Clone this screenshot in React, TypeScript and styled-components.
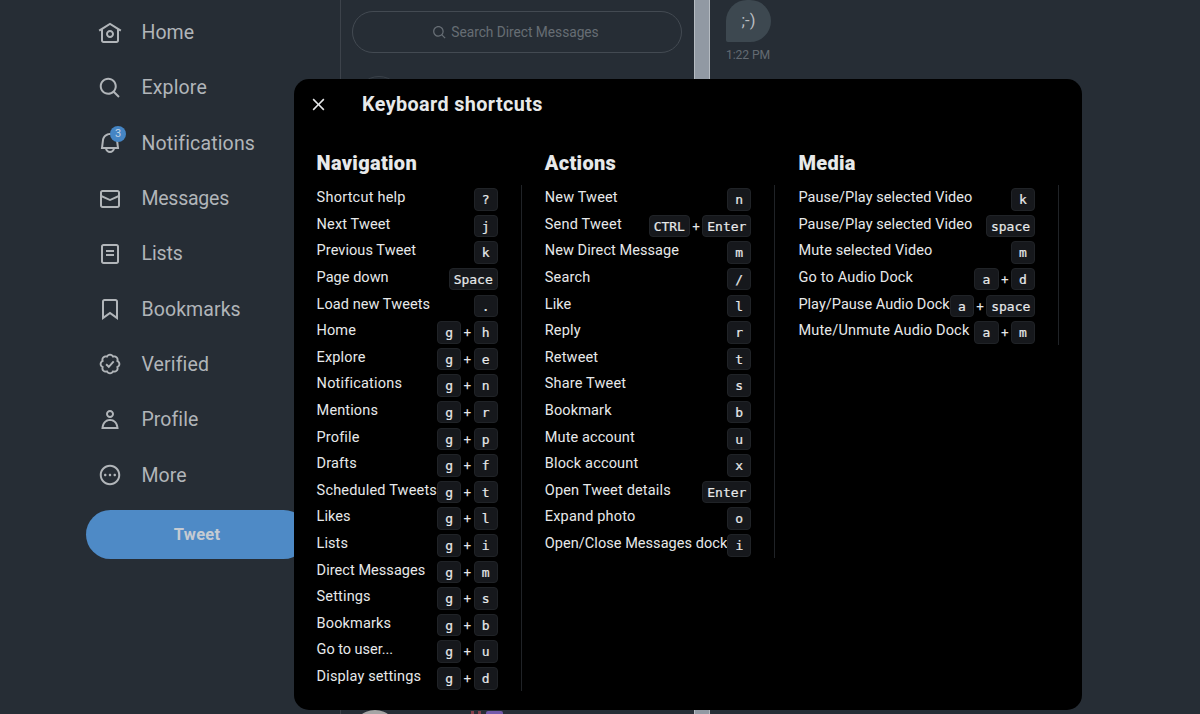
import React from "react";
import styled, { createGlobalStyle } from "styled-components";

const Global = createGlobalStyle`
  * { box-sizing: border-box; }
  html, body { margin: 0; padding: 0; }
  body {
    background: #262d35;
    font-family: Roboto, "Liberation Sans", sans-serif;
    overflow: hidden;
  }
`;

const Page = styled.div`
  position: relative;
  width: 1200px;
  height: 714px;
  overflow: hidden;
  display: flex;
  background: #262d35;
`;

const Sidebar = styled.nav`
  width: 341px;
  flex: none;
  padding: 5px 32px 0 86px;
  border-right: 1px solid #3d434b;
`;

const NavItem = styled.a`
  display: flex;
  align-items: center;
  height: 55.3px;
  padding-left: 12px;
  gap: 19.5px;
  color: #b1b5b9;
`;

const IconBox = styled.span`
  position: relative;
  display: flex;
`;

const NavLabel = styled.span<{ $spacing: number }>`
  margin-top: 1px;
  font-size: 19.5px;
  line-height: 24px;
  letter-spacing: ${(p) => p.$spacing}px;
  white-space: nowrap;
`;

const Badge = styled.span`
  position: absolute;
  left: 12px;
  top: -5px;
  width: 16px;
  height: 16px;
  border-radius: 50%;
  background: #4585c4;
  color: #c3d3e3;
  font-size: 11px;
  line-height: 16px;
  text-align: center;
`;

const TweetButton = styled.button`
  display: block;
  width: 222px;
  height: 49px;
  margin-top: 7px;
  border: 0;
  border-radius: 25px;
  background: #4e8ac6;
  color: #c5cbd2;
  font: 700 16.5px Roboto, sans-serif;
  letter-spacing: 0.2px;
`;

const Inbox = styled.section`
  width: 353px;
  flex: none;
  display: flex;
  flex-direction: column;
  justify-content: space-between;
  padding: 11px 12px 0 11px;
`;

const SearchBox = styled.div`
  height: 42px;
  border: 1px solid #434a52;
  border-radius: 21px;
  display: flex;
  align-items: center;
  justify-content: center;
  gap: 4px;
  padding-right: 3px;
  color: #666d74;
  font-size: 13.75px;
  letter-spacing: -0.03px;
`;

const AvatarRing = styled.div`
  width: 46px;
  height: 46px;
  margin: 23px 0 0 4px;
  border: 1px solid #3a4149;
  border-radius: 50%;
`;

const LastThread = styled.div`
  height: 4px;
  display: flex;
  align-items: flex-start;
  overflow: hidden;
`;

const LastAvatar = styled.div`
  flex: none;
  width: 46px;
  height: 46px;
  border-radius: 50%;
  background: #a5a5a5;
`;

const RedMarks = styled.div`
  width: 10px;
  height: 4px;
  margin: 1px 5px 0 73px;
  border: solid #86404c;
  border-width: 0 3px;
`;

const PurpleTile = styled.div`
  width: 17px;
  height: 6px;
  margin-top: 1px;
  border-radius: 2px 2px 0 0;
  background: #7259aa;
`;

const ScrollTrack = styled.div`
  width: 16px;
  flex: none;
  background: #9199a3;
  border: solid #b5bbc1;
  border-width: 0 1px;
`;

const Chat = styled.main`
  flex: 1;
  padding-left: 16px;
`;

const Bubble = styled.div`
  width: 45px;
  height: 42px;
  border-radius: 22px 22px 22px 2px;
  background: #3d4850;
  color: #b9bdc1;
  display: flex;
  align-items: center;
  justify-content: center;
  font-size: 16.5px;
  padding-bottom: 1px;
`;

const Time = styled.div`
  margin-top: 5px;
  font-size: 12.2px;
  line-height: 16px;
  letter-spacing: -0.1px;
  color: #636a72;
`;

const Dialog = styled.div`
  position: absolute;
  left: 294px;
  top: 79px;
  width: 788px;
  height: 631px;
  border-radius: 15px;
  background: #000;
  color: #e7e9ea;
`;

const DialogHeader = styled.header`
  display: flex;
  align-items: center;
  height: 50px;
  padding-left: 14.5px;
  gap: 34.5px;
`;

const DialogTitle = styled.h2`
  margin: 0;
  font-size: 19.75px;
  font-weight: 700;
  letter-spacing: 0.4px;
`;

const Columns = styled.div`
  display: flex;
  align-items: flex-start;
  padding: 22px 0 0 22.6px;
  gap: 23px;
`;

const Column = styled.section<{ $width: number }>`
  width: ${(p) => p.$width}px;
  flex: none;
`;

const Heading = styled.h3<{ $spacing: number }>`
  margin: 0;
  height: 34.1px;
  line-height: 25px;
  font-size: 20px;
  font-weight: 900;
  letter-spacing: ${(p) => p.$spacing}px;
`;

const List = styled.div`
  border-right: 1px solid #202327;
  padding-right: 23px;
`;

const Row = styled.div`
  height: 26.62px;
  display: flex;
  justify-content: space-between;
`;

const Label = styled.span<{ $spacing: number }>`
  font-size: 14.5px;
  line-height: 25px;
  letter-spacing: ${(p) => p.$spacing}px;
  white-space: nowrap;
`;

const Keys = styled.span`
  display: flex;
  padding-top: 3px;
`;

const Key = styled.kbd`
  min-width: 24.2px;
  height: 22.5px;
  padding: 0 4px;
  border: 1px solid #202327;
  border-radius: 4px;
  background: #16181c;
  font: 13px/22px "DejaVu Sans Mono", monospace;
  -webkit-text-stroke: 0.2px currentColor;
  text-align: center;
`;

const Plus = styled.span`
  width: 12.3px;
  text-align: center;
  font-size: 13.5px;
  line-height: 23px;
`;

const paths = {
  home: "M12 9c-2.209 0-4 1.791-4 4s1.791 4 4 4 4-1.791 4-4-1.791-4-4-4zm0 6c-1.105 0-2-.895-2-2s.895-2 2-2 2 .895 2 2-.895 2-2 2zm0-13.304L.622 8.807l1.06 1.696L3 9.679V19.5C3 20.881 4.119 22 5.5 22h13c1.381 0 2.5-1.119 2.5-2.5V9.679l1.318.824 1.06-1.696L12 1.696zM19 19.5c0 .276-.224.5-.5.5h-13c-.276 0-.5-.224-.5-.5V8.429l7-4.375 7 4.375V19.5z",
  search: "M10.25 3.75c-3.59 0-6.5 2.91-6.5 6.5s2.91 6.5 6.5 6.5c1.795 0 3.419-.726 4.596-1.904 1.178-1.177 1.904-2.801 1.904-4.596 0-3.59-2.91-6.5-6.5-6.5zm-8.5 6.5c0-4.694 3.806-8.5 8.5-8.5s8.5 3.806 8.5 8.5c0 1.986-.682 3.815-1.824 5.262l4.781 4.781-1.414 1.414-4.781-4.781c-1.447 1.142-3.276 1.824-5.262 1.824-4.694 0-8.5-3.806-8.5-8.5z",
  bell: "M19.993 9.042C19.48 5.017 16.054 2 11.996 2s-7.49 3.021-7.999 7.051L2.866 18H7.1c.463 2.282 2.481 4 4.9 4s4.437-1.718 4.9-4h4.236l-1.143-8.958zM12 20c-1.306 0-2.417-.835-2.829-2h5.658c-.412 1.165-1.523 2-2.829 2zm-6.866-4l.847-6.698C6.364 6.272 8.941 4 11.996 4s5.627 2.268 6.013 5.295L18.864 16H5.134z",
  mail: "M1.998 5.5c0-1.381 1.119-2.5 2.5-2.5h15c1.381 0 2.5 1.119 2.5 2.5v13c0 1.381-1.119 2.5-2.5 2.5h-15c-1.381 0-2.5-1.119-2.5-2.5v-13zm2.5-.5c-.276 0-.5.224-.5.5v2.764l8 3.638 8-3.636V5.5c0-.276-.224-.5-.5-.5h-15zm15.5 5.463l-8 3.636-8-3.638V18.5c0 .276.224.5.5.5h15c.276 0 .5-.224.5-.5v-8.037z",
  list: "M3 4.5C3 3.12 4.12 2 5.5 2h13C19.88 2 21 3.12 21 4.5v15c0 1.38-1.12 2.5-2.5 2.5h-13C4.12 22 3 20.88 3 19.5v-15zM5.5 4c-.28 0-.5.22-.5.5v15c0 .28.22.5.5.5h13c.28 0 .5-.22.5-.5v-15c0-.28-.22-.5-.5-.5h-13zM16 10H8V8h8v2zm-8 2h8v2H8v-2z",
  bookmark: "M4 4.5C4 3.12 5.119 2 6.5 2h11C18.881 2 20 3.12 20 4.5v18.44l-8-5.71-8 5.71V4.5zM6.5 4c-.276 0-.5.22-.5.5v14.56l6-4.29 6 4.29V4.5c0-.28-.224-.5-.5-.5h-11z",
  profile: "M5.651 19h12.698c-.337-1.8-1.023-3.21-1.945-4.19C15.318 13.65 13.838 13 12 13s-3.317.65-4.404 1.81c-.922.98-1.608 2.39-1.945 4.19zm.486-5.56C7.627 11.85 9.648 11 12 11s4.373.85 5.863 2.44c1.477 1.58 2.366 3.8 2.632 6.46l.11 1.1H3.395l.11-1.1c.266-2.66 1.155-4.88 2.632-6.46zM12 4c-1.105 0-2 .9-2 2s.895 2 2 2 2-.9 2-2-.895-2-2-2zM8 6c0-2.21 1.791-4 4-4s4 1.79 4 4-1.791 4-4 4-4-1.79-4-4z",
  more: "M3.75 12c0-4.56 3.69-8.25 8.25-8.25s8.25 3.69 8.25 8.25-3.69 8.25-8.25 8.25S3.75 16.56 3.75 12zM12 1.75C6.34 1.75 1.75 6.34 1.75 12S6.34 22.25 12 22.25 22.25 17.66 22.25 12 17.66 1.75 12 1.75zm-4.75 11.5c.69 0 1.25-.56 1.25-1.25s-.56-1.25-1.25-1.25S6 11.31 6 12s.56 1.25 1.25 1.25zm9.5 0c.69 0 1.25-.56 1.25-1.25s-.56-1.25-1.25-1.25-1.25.56-1.25 1.25.56 1.25 1.25 1.25zM13.25 12c0 .69-.56 1.25-1.25 1.25s-1.25-.56-1.25-1.25.56-1.25 1.25-1.25 1.25.56 1.25 1.25z",
  close: "M10.59 12L4.54 5.96l1.42-1.42L12 10.59l6.04-6.05 1.42 1.42L13.41 12l6.05 6.04-1.42 1.42L12 13.41l-6.04 6.05-1.42-1.42L10.59 12z",
};

const seal =
  "M20.396 11c-.018-.646-.215-1.275-.57-1.816-.354-.54-.852-.972-1.438-1.246.223-.607.27-1.264.14-1.897-.131-.634-.437-1.218-.882-1.687-.47-.445-1.053-.75-1.687-.882-.633-.13-1.29-.083-1.897.14-.273-.587-.704-1.086-1.245-1.44S11.647 1.62 11 1.604c-.646.017-1.273.213-1.813.568s-.969.854-1.24 1.44c-.608-.223-1.267-.272-1.902-.14-.635.13-1.22.436-1.69.882-.445.47-.749 1.055-.878 1.688-.13.633-.08 1.29.144 1.896-.587.274-1.087.705-1.443 1.245-.356.54-.555 1.17-.574 1.817.02.647.218 1.276.574 1.817.356.54.856.972 1.443 1.245-.224.606-.274 1.263-.144 1.896.13.634.433 1.218.877 1.688.47.443 1.054.747 1.687.878.633.132 1.29.084 1.897-.136.274.586.705 1.084 1.246 1.439.54.354 1.17.551 1.816.569.647-.016 1.276-.213 1.817-.567s.972-.854 1.245-1.44c.604.239 1.266.296 1.903.164.636-.132 1.22-.447 1.68-.907.46-.46.776-1.044.908-1.681s.075-1.299-.165-1.903c.586-.274 1.084-.705 1.439-1.246.354-.54.551-1.17.569-1.816z";

type IconName = keyof typeof paths | "verified";

function Icon({ name, size = 24 }: { name: IconName; size?: number }) {
  return (
    <svg width={size} height={size} viewBox="0 0 24 24" fill="currentColor">
      {name === "verified" ? (
        <g fill="none" stroke="currentColor" strokeWidth="1.9">
          <path d={seal} transform="translate(1 1)" />
          <path d="M8.1 12.2l2.7 2.6 4.9-5.5" />
        </g>
      ) : (
        <path d={paths[name]} />
      )}
    </svg>
  );
}

const nav: { icon: IconName; label: string; spacing: number; badge?: string }[] = [
  { icon: "home", label: "Home", spacing: 0 },
  { icon: "search", label: "Explore", spacing: 0.15 },
  { icon: "bell", label: "Notifications", spacing: 0.15, badge: "3" },
  { icon: "mail", label: "Messages", spacing: -0.25 },
  { icon: "list", label: "Lists", spacing: -0.1 },
  { icon: "bookmark", label: "Bookmarks", spacing: 0.08 },
  { icon: "verified", label: "Verified", spacing: 0.12 },
  { icon: "profile", label: "Profile", spacing: 0.06 },
  { icon: "more", label: "More", spacing: 0.1 },
];

type Shortcut = [label: string, keys: string[], spacing?: number];

const groups: { title: string; width: number; spacing: number; items: Shortcut[] }[] = [
  {
    title: "Navigation",
    width: 205.2,
    spacing: 0.3,
    items: [
      ["Shortcut help", ["?"], 0.23],
      ["Next Tweet", ["j"], 0.13],
      ["Previous Tweet", ["k"]],
      ["Page down", ["Space"], 0.03],
      ["Load new Tweets", ["."]],
      ["Home", ["g", "h"]],
      ["Explore", ["g", "e"], 0.15],
      ["Notifications", ["g", "n"], 0.2],
      ["Mentions", ["g", "r"], 0.13],
      ["Profile", ["g", "p"], 0.13],
      ["Drafts", ["g", "f"], 0.15],
      ["Scheduled Tweets", ["g", "t"], 0.18],
      ["Likes", ["g", "l"]],
      ["Lists", ["g", "i"]],
      ["Direct Messages", ["g", "m"], 0.05],
      ["Settings", ["g", "s"], 0.15],
      ["Bookmarks", ["g", "b"], 0.13],
      ["Go to user...", ["g", "u"], -0.03],
      ["Display settings", ["g", "d"], 0.14],
    ],
  },
  {
    title: "Actions",
    width: 230.6,
    spacing: 0.3,
    items: [
      ["New Tweet", ["n"], 0.16],
      ["Send Tweet", ["CTRL", "Enter"], 0.2],
      ["New Direct Message", ["m"]],
      ["Search", ["/"], 0.17],
      ["Like", ["l"]],
      ["Reply", ["r"], 0.15],
      ["Retweet", ["t"], 0.15],
      ["Share Tweet", ["s"], 0.17],
      ["Bookmark", ["b"], 0.13],
      ["Mute account", ["u"], 0.1],
      ["Block account", ["x"], 0.16],
      ["Open Tweet details", ["Enter"], 0.17],
      ["Expand photo", ["o"], 0.18],
      ["Open/Close Messages dock", ["i"], 0.05],
    ],
  },
  {
    title: "Media",
    width: 260.7,
    spacing: 0.3,
    items: [
      ["Pause/Play selected Video", ["k"], 0.08],
      ["Pause/Play selected Video", ["space"], 0.08],
      ["Mute selected Video", ["m"], 0.12],
      ["Go to Audio Dock", ["a", "d"], 0.18],
      ["Play/Pause Audio Dock", ["a", "space"], 0.03],
      ["Mute/Unmute Audio Dock", ["a", "m"], 0.19],
    ],
  },
];

export default function App() {
  return (
    <Page>
      <Global />
      <Sidebar>
        {nav.map((n) => (
          <NavItem key={n.label}>
            <IconBox>
              <Icon name={n.icon} />
              {n.badge && <Badge>{n.badge}</Badge>}
            </IconBox>
            <NavLabel $spacing={n.spacing}>{n.label}</NavLabel>
          </NavItem>
        ))}
        <TweetButton>Tweet</TweetButton>
      </Sidebar>
      <Inbox>
        <div>
          <SearchBox>
            <Icon name="search" size={15} />
            Search Direct Messages
          </SearchBox>
          <AvatarRing />
        </div>
        <LastThread>
          <LastAvatar />
          <RedMarks />
          <PurpleTile />
        </LastThread>
      </Inbox>
      <ScrollTrack />
      <Chat>
        <Bubble>;-)</Bubble>
        <Time>1:22 PM</Time>
      </Chat>
      <Dialog role="dialog">
        <DialogHeader>
          <Icon name="close" size={19} />
          <DialogTitle>Keyboard shortcuts</DialogTitle>
        </DialogHeader>
        <Columns>
          {groups.map((g) => (
            <Column key={g.title} $width={g.width}>
              <Heading $spacing={g.spacing}>{g.title}</Heading>
              <List>
                {g.items.map(([label, keys, spacing = 0.07], i) => (
                  <Row key={i}>
                    <Label $spacing={spacing}>{label}</Label>
                    <Keys>
                      {keys.map((k, j) => (
                        <React.Fragment key={j}>
                          {j > 0 && <Plus>+</Plus>}
                          <Key>{k}</Key>
                        </React.Fragment>
                      ))}
                    </Keys>
                  </Row>
                ))}
              </List>
            </Column>
          ))}
        </Columns>
      </Dialog>
    </Page>
  );
}
